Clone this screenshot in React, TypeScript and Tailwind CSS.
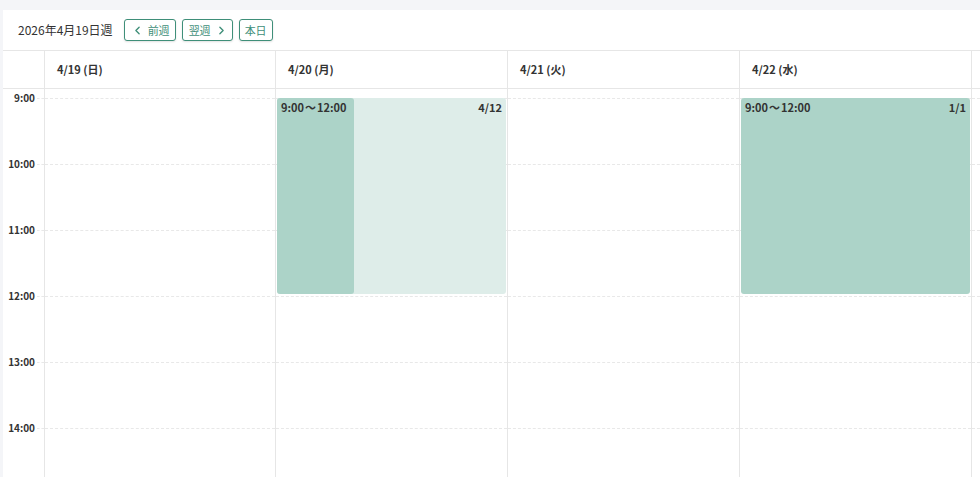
import { ChevronLeft, ChevronRight } from "lucide-react";

const days = ["4/19 (日)", "4/20 (月)", "4/21 (火)", "4/22 (水)", ""];
const widths = ["w-[231px]", "w-[232px]", "w-[232px]", "w-[232px]", "w-[232px]"];
const hours = ["9:00", "10:00", "11:00", "12:00", "13:00", "14:00"];

const font = { fontFamily: '"Noto Sans CJK JP", "Noto Sans", sans-serif' };

function NavButton({ children, pad = "pl-[6px] pr-[5px]" }: { children: React.ReactNode; pad?: string }) {
  return (
    <button className={`flex h-[22px] items-center gap-[4px] rounded-[3px] border border-[#3f8f79] bg-white ${pad} text-[11px] text-[#3f8f79] shadow-[0_1px_2px_rgba(0,0,0,0.12)]`}>
      {children}
    </button>
  );
}

function HourRows() {
  return (
    <div className="pt-[9px]">
      {hours.map((h) => (
        <div key={h} className="h-[66px] border-t border-dashed border-[#e8e8e8]" />
      ))}
    </div>
  );
}

function TimeRange() {
  return (
    <span className="whitespace-nowrap">
      9:00 <span className="mx-[-1.5px]">～</span> 12:00
    </span>
  );
}

export default function App() {
  return (
    <div className="h-[477px] w-[980px] overflow-hidden bg-[#f4f5f8] pl-[3px] pt-[10px] text-[#333]" style={font}>
      <div className="w-[1100px] bg-white">
        {/* toolbar */}
        <div className="flex h-[41px] items-center border-b border-[#e6e6e6] pl-[15px]">
          <span className="mr-[11px] text-[12px] text-[#333]">2026年4月19日週</span>
          <div className="flex gap-[6px]">
            <NavButton>
              <ChevronLeft size={13} strokeWidth={2.5} />
              前週
            </NavButton>
            <NavButton pad="pl-[6px] pr-[4px]">
              翌週
              <ChevronRight size={13} strokeWidth={2.5} />
            </NavButton>
            <NavButton pad="px-[5px]">本日</NavButton>
          </div>
        </div>

        {/* day headers */}
        <div className="flex h-[38px] border-b border-[#e6e6e6]">
          <div className="w-[42px] shrink-0 border-r border-[#e6e6e6]" />
          {days.map((d, i) => (
            <div key={i} className={`flex ${widths[i]} shrink-0 items-center border-r border-[#e6e6e6] pl-[12px] text-[11px] font-bold`}>
              {d}
            </div>
          ))}
        </div>

        {/* body */}
        <div className="flex h-[400px]">
          <div className="relative w-[42px] shrink-0 border-r border-[#e6e6e6] pt-[9px]">
            {hours.map((h) => (
              <div key={h} className="relative h-[66px]">
                <div className="absolute left-[34px] right-0 top-0 border-t border-dashed border-[#e8e8e8]" />
                <span className="absolute right-[9px] top-[-8px] text-[10px] font-bold leading-[16px]">{h}</span>
              </div>
            ))}
          </div>

          {days.map((_, i) => (
            <div key={i} className={`relative ${widths[i]} shrink-0 border-r border-[#e6e6e6]`}>
              <HourRows />
              {i === 1 && (
                <>
                  <div className="absolute left-[1px] right-[1px] top-[9px] flex h-[196px] justify-end rounded-[3px] bg-[#deede9] px-[4px] py-[1px] text-[11px] font-bold">
                    4/12
                  </div>
                  <div className="absolute left-[1px] top-[9px] h-[196px] w-[77px] rounded-[3px] bg-[#acd3c8] px-[4px] py-[1px] text-[11px] font-bold">
                    <TimeRange />
                  </div>
                </>
              )}
              {i === 3 && (
                <div className="absolute left-[1px] right-[1px] top-[9px] flex h-[196px] justify-between rounded-[3px] bg-[#acd3c8] px-[4px] py-[1px] text-[11px] font-bold">
                  <TimeRange />
                  <span>1/1</span>
                </div>
              )}
            </div>
          ))}
        </div>
      </div>
    </div>
  );
}
